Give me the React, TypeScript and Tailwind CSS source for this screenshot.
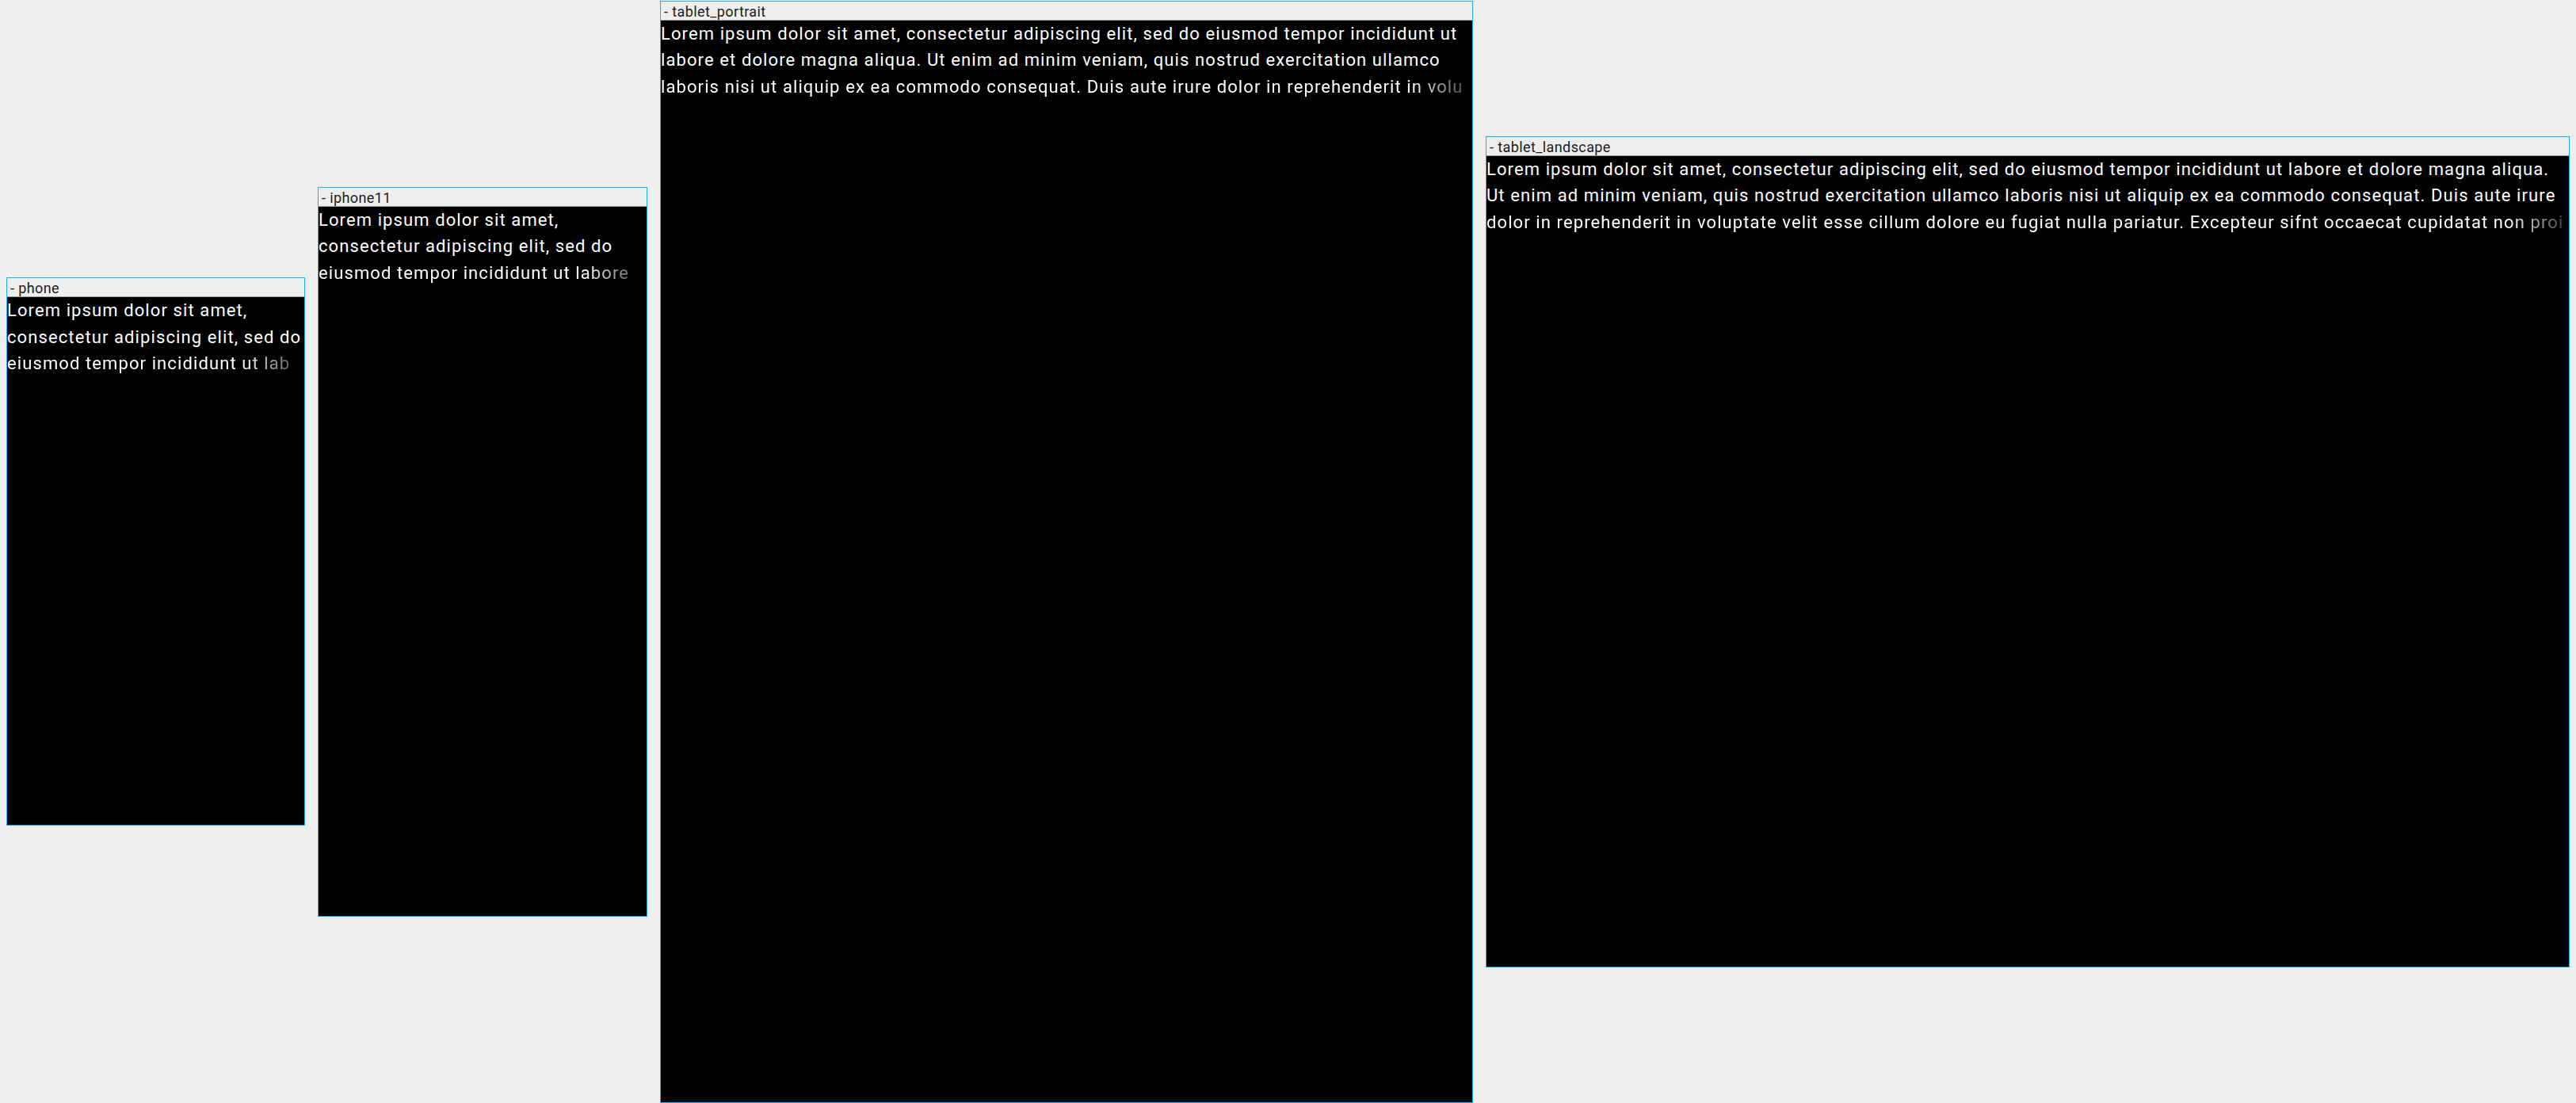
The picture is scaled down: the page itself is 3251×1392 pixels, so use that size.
import React from 'react';

type Frame = {
  name: string;
  width: number;
  height: number;
  lines: [string, string, string];
};

const frames: Frame[] = [
  {
    name: 'phone',
    width: 375,
    height: 667,
    lines: ['Lorem ipsum dolor sit amet,', 'consectetur adipiscing elit, sed do', 'eiusmod tempor incididunt ut lab'],
  },
  {
    name: 'iphone11',
    width: 414,
    height: 896,
    lines: ['Lorem ipsum dolor sit amet,', 'consectetur adipiscing elit, sed do', 'eiusmod tempor incididunt ut labore'],
  },
  {
    name: 'tablet_portrait',
    width: 1024,
    height: 1366,
    lines: [
      'Lorem ipsum dolor sit amet, consectetur adipiscing elit, sed do eiusmod tempor incididunt ut',
      'labore et dolore magna aliqua. Ut enim ad minim veniam, quis nostrud exercitation ullamco',
      'laboris nisi ut aliquip ex ea commodo consequat. Duis aute irure dolor in reprehenderit in volu',
    ],
  },
  {
    name: 'tablet_landscape',
    width: 1366,
    height: 1024,
    lines: [
      'Lorem ipsum dolor sit amet, consectetur adipiscing elit, sed do eiusmod tempor incididunt ut labore et dolore magna aliqua.',
      'Ut enim ad minim veniam, quis nostrud exercitation ullamco laboris nisi ut aliquip ex ea commodo consequat. Duis aute irure',
      'dolor in reprehenderit in voluptate velit esse cillum dolore eu fugiat nulla pariatur. Excepteur sifnt occaecat cupidatat non proi',
    ],
  },
];

function DeviceFrame({ frame }: { frame: Frame }) {
  return (
    <div className="flex flex-col border border-[#1fb0f4] shrink-0">
      {/* device label */}
      <div className="h-6 overflow-hidden bg-[#eeeeee] border-b border-[#9e9e9e] pl-1 pt-px">
        <div className="text-[18px] leading-[23px] tracking-[0.4px] text-[#1c1c1c] whitespace-nowrap">- {frame.name}</div>
      </div>

      {/* screen */}
      <div className="bg-black overflow-hidden" style={{ width: frame.width, height: frame.height - 1 }}>
        <div className="text-white text-[22px] leading-[33.5px] tracking-[1.1px] whitespace-nowrap">
          <div>{frame.lines[0]}</div>
          <div>{frame.lines[1]}</div>
          {/* last line fades out at the right edge */}
          <div className="overflow-hidden [mask-image:linear-gradient(to_right,#000_calc(100%_-_80px),transparent_calc(100%_+_20px))]">
            {frame.lines[2]}
          </div>
        </div>
      </div>
    </div>
  );
}

export default function App() {
  return (
    <div className="w-[3251px] h-[1392px] bg-[#eeeeee] flex items-center gap-4 px-2 font-['Roboto',sans-serif]">
      {frames.map((f) => (
        <DeviceFrame key={f.name} frame={f} />
      ))}
    </div>
  );
}
